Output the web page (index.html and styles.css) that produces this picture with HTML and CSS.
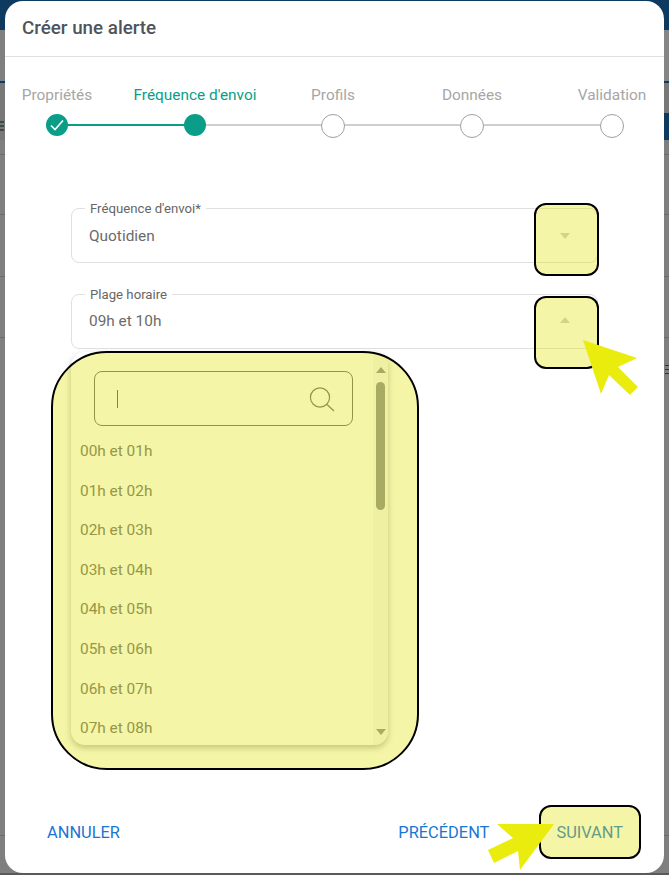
FILE: index.html
```html
<!DOCTYPE html>
<html lang="fr">
<head>
  <meta charset="UTF-8" />
  <meta name="viewport" content="width=device-width, initial-scale=1.0" />
  <title>Créer une alerte</title>
  <link rel="stylesheet" href="styles.css">
</head>
<body>
  <div class="behind">
    <div class="behind-top"></div>
    <div class="behind-stripe"></div>
    <div class="behind-gap"></div>
    <div class="behind-blue"><span class="behind-glyph"></span></div>
    <div class="behind-row"></div>
    <div class="behind-row r60"></div>
    <div class="behind-row r62"></div>
    <div class="behind-row r61"></div>
    <div class="behind-menu"><span class="behind-lines"></span></div>
    <div class="behind-row last"></div>
    <div class="behind-end"></div>
  </div>

  <div class="dialog">
    <header class="dialog-header">Créer une alerte</header>

    <div class="stepper">
      <div class="step done">
        <span class="step-label">Propriétés</span>
        <span class="step-dot">
          <svg width="14" height="12" viewBox="0 0 14 12"><path d="M1 6.5l4 4L13 1.5" fill="none" stroke="#fff" stroke-width="1.6"/></svg>
        </span>
      </div>
      <div class="step active">
        <span class="step-label">Fréquence d'envoi</span>
        <span class="step-dot"></span>
      </div>
      <div class="step">
        <span class="step-label">Profils</span>
        <span class="step-dot"></span>
      </div>
      <div class="step">
        <span class="step-label">Données</span>
        <span class="step-dot"></span>
      </div>
      <div class="step">
        <span class="step-label">Validation</span>
        <span class="step-dot"></span>
      </div>
    </div>

    <div class="form">
      <div class="field">
        <span class="field-label">Fréquence d'envoi*</span>
        <span class="field-value">Quotidien</span>
        <span class="caret caret-down"></span>
      </div>
      <div class="field field-open">
        <span class="field-label">Plage horaire</span>
        <span class="field-value">09h et 10h</span>
        <span class="caret caret-up"></span>

        <div class="dropdown">
          <div class="search">
            <span class="search-cursor"></span>
            <svg width="26" height="26" viewBox="0 0 26 26"><circle cx="11" cy="11.5" r="9.6" fill="none" stroke="#6a6a6a" stroke-width="1.2"/><path d="M18 18.5l7 6.5" stroke="#6a6a6a" stroke-width="1.2"/></svg>
          </div>
          <ul class="options">
            <li>00h et 01h</li>
            <li>01h et 02h</li>
            <li>02h et 03h</li>
            <li>03h et 04h</li>
            <li>04h et 05h</li>
            <li>05h et 06h</li>
            <li>06h et 07h</li>
            <li>07h et 08h</li>
          </ul>
          <div class="scrollbar">
            <span class="caret-scroll up"></span>
            <span class="thumb"></span>
            <span class="caret-scroll down"></span>
          </div>
        </div>
      </div>
    </div>

    <footer class="dialog-footer">
      <button class="btn">ANNULER</button>
      <div class="footer-right">
        <button class="btn">PRÉCÉDENT</button>
        <button class="btn">SUIVANT</button>
      </div>
    </footer>
  </div>

  <!-- annotations drawn on top of the screenshot -->
  <div class="mark mark-list"></div>
  <div class="mark mark-caret1"></div>
  <div class="mark mark-caret2"></div>
  <div class="mark mark-next"></div>
  <svg class="arrows" width="669" height="875" viewBox="0 0 669 875">
    <polygon points="583,340 637,358 618,367 638,387 630,395 609,375 601,394" fill="#e9ec0c"/>
    <polygon points="554,824 497,824 513,838 488,850 494,863 518,851 520,870" fill="#e9ec0c"/>
  </svg>
</body>
</html>
```

FILE: styles.css
```css
html, body {
  margin: 0;
  height: 875px;
  overflow: hidden;
}
body {
  font-family: Roboto, "Liberation Sans", sans-serif;
  background: #7f7f7f;
}

/* page behind the modal */
.behind {
  position: absolute;
  top: 0;
  left: 0;
  width: 669px;
  height: 875px;
  display: flex;
  flex-direction: column;
  overflow: hidden;
}
.behind-top {
  height: 30px;
  background: #0e3a60;
}
.behind-stripe {
  height: 53px;
  box-sizing: border-box;
  border-bottom: 2px solid #0e3a60;
  background: linear-gradient(90deg, #7f7f7f 0 664px, #858585 664px);
}
.behind-gap {
  height: 30px;
  background: #787878;
}
.behind-blue {
  height: 27px;
  overflow: hidden;
  background: linear-gradient(90deg, #787878 0 10px, #0e3a60 10px);
}
.behind-glyph {
  display: block;
  width: 4px;
  height: 12px;
  margin-top: 8px;
  background: repeating-linear-gradient(#3c4a48 0 2px, transparent 2px 4px);
}
.behind-row {
  height: 14px;
  border-bottom: 1px solid #6c6c6c;
}
.behind-row.r60 {
  height: 59px;
}
.behind-row.r62 {
  height: 61px;
}
.behind-row.r61 {
  height: 60px;
}
.behind-row.last {
  height: 460px;
}
.behind-menu {
  height: 37px;
  overflow: hidden;
}
.behind-lines {
  display: block;
  width: 4px;
  height: 10px;
  margin: 27px 0 0 auto;
  background: repeating-linear-gradient(#333 0 1px, transparent 1px 4px);
}
.behind-end {
  margin-top: auto;
  height: 2px;
  background: #5a5a5a;
}

/* modal */
.dialog {
  position: relative;
  box-sizing: border-box;
  width: 659px;
  height: 872px;
  margin: 1px 0 0 5px;
  background: #fff;
  border-radius: 18px;
  display: flex;
  flex-direction: column;
}
.dialog-header {
  box-sizing: border-box;
  height: 56px;
  padding: 16px 17px 0;
  font-size: 18.8px;
  line-height: 22px;
  font-weight: 500;
  color: #4f545c;
  border-bottom: 1px solid #e0e0e0;
}

/* stepper */
.stepper {
  display: grid;
  grid-template-columns: 138px 138px 139px 140px 100px;
  padding: 29px 0 0 2px;
}
.step {
  position: relative;
  width: 100px;
  display: flex;
  flex-direction: column;
  align-items: center;
}
.step-label {
  font-size: 15.4px;
  line-height: 18px;
  white-space: nowrap;
  color: #a6a6a6;
}
.step-dot {
  position: relative;
  z-index: 1;
  box-sizing: border-box;
  width: 24px;
  height: 24px;
  margin-top: 10px;
  border: 1px solid #a0a0a0;
  border-radius: 50%;
  background: #fff;
}
.step:not(:last-child)::after {
  content: "";
  position: absolute;
  top: 38px;
  left: 50%;
  width: 140px;
  height: 2px;
  background: #cfcfcf;
}
.step.done::after {
  background: #0a9e88;
}
.step.done .step-dot,
.step.active .step-dot {
  width: 22px;
  height: 22px;
  border: none;
  background: #0a9e88;
  display: flex;
  align-items: center;
  justify-content: center;
}
.step.active .step-label {
  color: #0a9e88;
}

/* form */
.form {
  display: flex;
  flex-direction: column;
  gap: 31px;
  padding: 70px 66px 0;
}
.field {
  position: relative;
  box-sizing: border-box;
  height: 55px;
  padding: 17px 17px 0;
  border: 1px solid #e0e0e0;
  border-radius: 8px;
}
.field-open {
  padding-top: 16px;
}
.field-label {
  position: absolute;
  top: -8px;
  left: 13px;
  padding: 0 5px;
  background: #fff;
  font-size: 13.2px;
  line-height: 15px;
  color: #666;
}
.field-value {
  font-size: 15.4px;
  line-height: 18px;
  color: #6b6b6b;
}
.caret {
  position: absolute;
  right: 27px;
  width: 0;
  height: 0;
  border-left: 5px solid transparent;
  border-right: 5px solid transparent;
}
.caret-down {
  top: 24px;
  border-top: 6px solid #ccc;
}
.caret-up {
  top: 22px;
  border-bottom: 6px solid #ccc;
}

/* open list */
.dropdown {
  position: absolute;
  top: 57px;
  left: -1px;
  box-sizing: border-box;
  width: 317px;
  height: 393px;
  padding: 19px 0 0;
  background: #fff;
  border-radius: 14px;
  box-shadow: 0 3px 6px rgba(0, 0, 0, 0.28);
  overflow: hidden;
}
.search {
  box-sizing: border-box;
  width: 259px;
  height: 55px;
  margin-left: 23px;
  padding: 0 17px 0 22px;
  border: 1px solid #6a6a6a;
  border-radius: 8px;
  display: flex;
  align-items: center;
  justify-content: space-between;
}
.search-cursor {
  width: 1px;
  height: 18px;
  background: #555;
}
.options {
  list-style: none;
  margin: 6px 0 0;
  padding: 0;
}
.options li {
  height: 39.6px;
  padding-left: 9px;
  font-size: 15.4px;
  line-height: 39.6px;
  color: #6e6e6e;
}
.scrollbar {
  position: absolute;
  top: 0;
  right: 0;
  bottom: 0;
  width: 15px;
  background: #f8f8f8;
  display: flex;
  flex-direction: column;
  align-items: center;
}
.thumb {
  width: 9px;
  height: 128px;
  margin-top: 9px;
  border-radius: 5px;
  background: #8e8e98;
}
.caret-scroll {
  width: 0;
  height: 0;
  border-left: 5px solid transparent;
  border-right: 5px solid transparent;
}
.caret-scroll.up {
  margin-top: 15px;
  border-bottom: 6px solid #8e8e98;
}
.caret-scroll.down {
  margin-top: auto;
  margin-bottom: 10px;
  border-top: 6px solid #8e8e98;
}

/* footer */
.dialog-footer {
  margin-top: auto;
  padding: 0 41px 31px 42px;
  display: flex;
  justify-content: space-between;
  align-items: center;
}
.footer-right {
  display: flex;
  gap: 67px;
}
.btn {
  padding: 0;
  border: none;
  background: none;
  font-family: inherit;
  font-size: 16.4px;
  line-height: 19px;
  color: #1976d2;
  cursor: pointer;
}

/* yellow highlights */
.mark {
  position: absolute;
  box-sizing: border-box;
  background: rgba(224, 226, 0, 0.35);
  border: 2px solid #000;
}
.mark-list {
  left: 51px;
  top: 351px;
  width: 368px;
  height: 419px;
  border-radius: 56px;
}
.mark-caret1 {
  left: 534px;
  top: 203px;
  width: 65px;
  height: 73px;
  border-radius: 12px;
}
.mark-caret2 {
  left: 534px;
  top: 296px;
  width: 65px;
  height: 73px;
  border-radius: 12px;
}
.mark-next {
  left: 539px;
  top: 805px;
  width: 102px;
  height: 54px;
  border-radius: 12px;
}
.arrows {
  position: absolute;
  top: 0;
  left: 0;
}
```
